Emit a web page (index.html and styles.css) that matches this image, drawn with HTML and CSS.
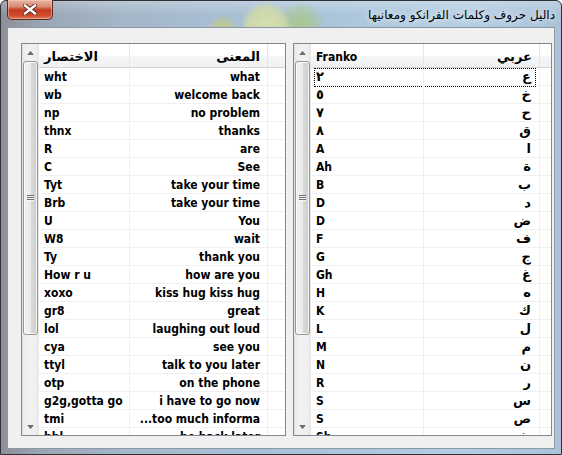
FILE: index.html
```html
<!DOCTYPE html>
<html lang="ar">
<head>
<meta charset="utf-8">
<title>دليل</title>
<link rel="stylesheet" href="styles.css">
</head>
<body>
<div class="window">
  <div class="titlebar">
    <div class="close">
      <svg width="14" height="11" viewBox="0 0 14 11"><path d="M2 1.5 L12 9.5 M12 1.5 L2 9.5" stroke="#5a2018" stroke-width="4.2" stroke-linecap="square" fill="none"/><path d="M2 1.5 L12 9.5 M12 1.5 L2 9.5" stroke="#ffffff" stroke-width="2.4" stroke-linecap="square" fill="none"/></svg>
    </div>
    <div class="title">داليل حروف وكلمات الفرانكو ومعانيها</div>
  </div>
  <div class="client">
    <div class="lv lv-left">
      <div class="sb">
        <div class="sb-btn"><svg width="7" height="4" viewBox="0 0 7 4"><path d="M0 4 L3.5 0 L7 4 Z" fill="#6b6b6b"/></svg></div>
        <div class="sb-track">
          <div class="thumb"><span class="grip"></span></div>
        </div>
        <div class="sb-btn"><svg width="7" height="4" viewBox="0 0 7 4"><path d="M0 0 L3.5 4 L7 0 Z" fill="#6b6b6b"/></svg></div>
      </div>
      <div class="lv-main">
        <div class="hdr hdr-left">
          <div class="hc ar">الاختصار</div>
          <div class="hc hr ar">المعنى</div>
          <div class="hc"></div>
        </div>
        <div class="rows rows-left">
          <div class="row"><div class="cell">wht</div><div class="cell cr">what</div><div></div></div>
          <div class="row"><div class="cell">wb</div><div class="cell cr">welcome back</div><div></div></div>
          <div class="row"><div class="cell">np</div><div class="cell cr">no problem</div><div></div></div>
          <div class="row"><div class="cell">thnx</div><div class="cell cr">thanks</div><div></div></div>
          <div class="row"><div class="cell">R</div><div class="cell cr">are</div><div></div></div>
          <div class="row"><div class="cell">C</div><div class="cell cr">See</div><div></div></div>
          <div class="row"><div class="cell">Tyt</div><div class="cell cr">take your time</div><div></div></div>
          <div class="row"><div class="cell">Brb</div><div class="cell cr">take your time</div><div></div></div>
          <div class="row"><div class="cell">U</div><div class="cell cr">You</div><div></div></div>
          <div class="row"><div class="cell">W8</div><div class="cell cr">wait</div><div></div></div>
          <div class="row"><div class="cell">Ty</div><div class="cell cr">thank you</div><div></div></div>
          <div class="row"><div class="cell">How r u</div><div class="cell cr">how are you</div><div></div></div>
          <div class="row"><div class="cell">xoxo</div><div class="cell cr">kiss hug kiss hug</div><div></div></div>
          <div class="row"><div class="cell">gr8</div><div class="cell cr">great</div><div></div></div>
          <div class="row"><div class="cell">lol</div><div class="cell cr">laughing out loud</div><div></div></div>
          <div class="row"><div class="cell">cya</div><div class="cell cr">see you</div><div></div></div>
          <div class="row"><div class="cell">ttyl</div><div class="cell cr">talk to you later</div><div></div></div>
          <div class="row"><div class="cell">otp</div><div class="cell cr">on the phone</div><div></div></div>
          <div class="row"><div class="cell">g2g,gotta go</div><div class="cell cr">i have to go now</div><div></div></div>
          <div class="row"><div class="cell">tmi</div><div class="cell cr">...too much informa</div><div></div></div>
          <div class="row"><div class="cell">bbl</div><div class="cell cr">be back later</div><div></div></div>
        </div>
      </div>
    </div>
    <div class="lv lv-right">
      <div class="sb">
        <div class="sb-btn"><svg width="7" height="4" viewBox="0 0 7 4"><path d="M0 4 L3.5 0 L7 4 Z" fill="#6b6b6b"/></svg></div>
        <div class="sb-track">
          <div class="thumb"><span class="grip"></span></div>
        </div>
        <div class="sb-btn"><svg width="7" height="4" viewBox="0 0 7 4"><path d="M0 0 L3.5 4 L7 0 Z" fill="#6b6b6b"/></svg></div>
      </div>
      <div class="lv-main">
        <div class="hdr hdr-right">
          <div class="hc">Franko</div>
          <div class="hc hr ar">عربي</div>
          <div class="hc"></div>
        </div>
        <div class="rows rows-right">
          <div class="row focus"><div class="cell ar">٢</div><div class="cell cr ar">ع</div><div></div></div>
          <div class="row"><div class="cell ar">٥</div><div class="cell cr ar">خ</div><div></div></div>
          <div class="row"><div class="cell ar">٧</div><div class="cell cr ar">ح</div><div></div></div>
          <div class="row"><div class="cell ar">٨</div><div class="cell cr ar">ق</div><div></div></div>
          <div class="row"><div class="cell">A</div><div class="cell cr ar">ا</div><div></div></div>
          <div class="row"><div class="cell">Ah</div><div class="cell cr ar">ة</div><div></div></div>
          <div class="row"><div class="cell">B</div><div class="cell cr ar">ب</div><div></div></div>
          <div class="row"><div class="cell">D</div><div class="cell cr ar">د</div><div></div></div>
          <div class="row"><div class="cell">D</div><div class="cell cr ar">ض</div><div></div></div>
          <div class="row"><div class="cell">F</div><div class="cell cr ar">ف</div><div></div></div>
          <div class="row"><div class="cell">G</div><div class="cell cr ar">ج</div><div></div></div>
          <div class="row"><div class="cell">Gh</div><div class="cell cr ar">غ</div><div></div></div>
          <div class="row"><div class="cell">H</div><div class="cell cr ar">ه</div><div></div></div>
          <div class="row"><div class="cell">K</div><div class="cell cr ar">ك</div><div></div></div>
          <div class="row"><div class="cell">L</div><div class="cell cr ar">ل</div><div></div></div>
          <div class="row"><div class="cell">M</div><div class="cell cr ar">م</div><div></div></div>
          <div class="row"><div class="cell">N</div><div class="cell cr ar">ن</div><div></div></div>
          <div class="row"><div class="cell">R</div><div class="cell cr ar">ر</div><div></div></div>
          <div class="row"><div class="cell">S</div><div class="cell cr ar">س</div><div></div></div>
          <div class="row"><div class="cell">S</div><div class="cell cr ar">ص</div><div></div></div>
          <div class="row"><div class="cell">Sh</div><div class="cell cr ar">ش</div><div></div></div>
        </div>
      </div>
    </div>
  </div>
</div>
</body>
</html>
```

FILE: styles.css
```css
* { box-sizing: border-box; }
html, body { margin: 0; padding: 0; }
body {
  width: 562px;
  height: 455px;
  overflow: hidden;
  background: #ffffff;
  font-family: "DejaVu Sans Condensed", "DejaVu Sans", sans-serif;
}
.window {
  width: 562px;
  height: 455px;
  border: 1px solid #2e3236;
  border-radius: 6px 6px 0 0;
  padding: 0 6px 7px 6px;
  display: flex;
  flex-direction: column;
  background:
    radial-gradient(circle at 222px 30px, rgba(196,206,128,0.8) 0, rgba(196,206,128,0.55) 10px, rgba(196,206,128,0) 16px),
    radial-gradient(circle at 265px 26px, rgba(220,226,170,0.9) 0, rgba(214,222,160,0.75) 18px, rgba(214,222,160,0) 26px),
    radial-gradient(circle at 300px 24px, rgba(170,200,130,0.85) 0, rgba(170,200,130,0.5) 14px, rgba(170,200,130,0) 24px),
    linear-gradient(180deg, rgba(255,255,255,0.25) 0, rgba(255,255,255,0) 14px),
    linear-gradient(90deg, #8d8f97 0, #9aa6b4 40px, #a4b6c8 120px, #a8bdd1 200px, #aac4da 320px, #b4cde2 460px, #a9c2d8 562px);
}
.titlebar {
  height: 26px;
  display: flex;
  align-items: flex-start;
  justify-content: space-between;
  flex: none;
}
.close {
  width: 46px;
  height: 20px;
  margin-top: -1px;
  border: 1px solid #5b2b22;
  border-top: none;
  border-radius: 0 0 5px 5px;
  background: linear-gradient(180deg, #e9b3a4 0, #d88a72 35%, #c43a22 52%, #cf4a2c 80%, #de7a5a 100%);
  display: flex;
  align-items: center;
  justify-content: center;
  box-shadow: inset 0 0 0 1px rgba(255,220,200,0.45);
}
.title {
  direction: rtl;
  font-family: "DejaVu Sans", sans-serif;
  font-size: 12px;
  color: #000;
  margin-top: 7px;
  text-shadow: 0 0 6px rgba(255,255,255,0.9), 0 0 10px rgba(255,255,255,0.7);
}
.client {
  flex: 1;
  background: #f0f0f0;
  display: flex;
  gap: 7px;
  padding: 15px 2px 12px 13px;
  border: 1px solid #8c98a6;
}
.lv {
  border: 1px solid #828790;
  background: #fff;
  display: flex;
  overflow: hidden;
  height: 393px;
}
.lv-left { width: 266px; }
.lv-right { width: 260px; }
.sb {
  width: 17px;
  flex: none;
  display: flex;
  flex-direction: column;
  background: linear-gradient(90deg, #e3e3e3 0, #eeeeee 3px, #f2f2f2 8px, #eeeeee 14px, #e6e6e6 17px);
}
.sb-btn {
  height: 17px;
  flex: none;
  display: flex;
  align-items: center;
  justify-content: center;
}
.sb-track {
  flex: 1;
  display: flex;
  flex-direction: column;
  padding: 0 1px;
}
.thumb {
  height: 274px;
  border: 1px solid #979797;
  border-radius: 3px;
  background: linear-gradient(90deg, #f2f2f2 0, #ebebeb 50%, #d9d9d9 51%, #cfcfcf 100%);
  box-shadow: inset 0 0 0 1px rgba(255,255,255,0.7);
  display: flex;
  align-items: center;
  justify-content: center;
}
.grip {
  width: 7px;
  height: 6px;
  background: repeating-linear-gradient(180deg, #6e6e6e 0, #6e6e6e 1px, #f4f4f4 1px, #f4f4f4 2px);
}
.lv-main {
  flex: 1;
  display: flex;
  flex-direction: column;
  min-width: 0;
}
.hdr {
  height: 24px;
  flex: none;
  display: grid;
  background: linear-gradient(180deg, #ffffff 0, #ffffff 50%, #f5f6f7 51%, #f0f1f2 100%);
  border-bottom: 1px solid #d5d5d5;
}
.hdr-left, .rows-left .row { grid-template-columns: 91px 138px 1fr; }
.hdr-right, .rows-right .row { grid-template-columns: 113px 116px 1fr; }
.hc {
  font-weight: bold;
  font-size: 12px;
  color: #000;
  line-height: 20px;
  padding: 3px 7px 0 5px;
  border-right: 1px solid #e3e8ee;
  white-space: nowrap;
  overflow: hidden;
}
.hc:last-child { border-right: none; }
.hr { text-align: right; direction: rtl; }
.rows {
  flex: 1;
  overflow: hidden;
}
.row {
  display: grid;
  height: 18px;
  border-bottom: 1px solid #f0f0f0;
  position: relative;
}
.cell {
  font-weight: bold;
  font-size: 12px;
  color: #000;
  line-height: 16px;
  padding: 1px 7px 0 5px;
  border-right: 1px solid #f0f0f0;
  white-space: nowrap;
  overflow: hidden;
}
.cr { text-align: right; }
.ar {
  font-family: "DejaVu Sans", sans-serif;
  font-size: 13px;
}
.rows-right .cr { direction: rtl; padding: 0 8px 0 5px; font-size: 13px; line-height: 18px; }
.focus::after {
  content: "";
  position: absolute;
  left: 3px;
  top: 0;
  width: 220px;
  height: 17px;
  border: 1px dotted #000;
}
```
